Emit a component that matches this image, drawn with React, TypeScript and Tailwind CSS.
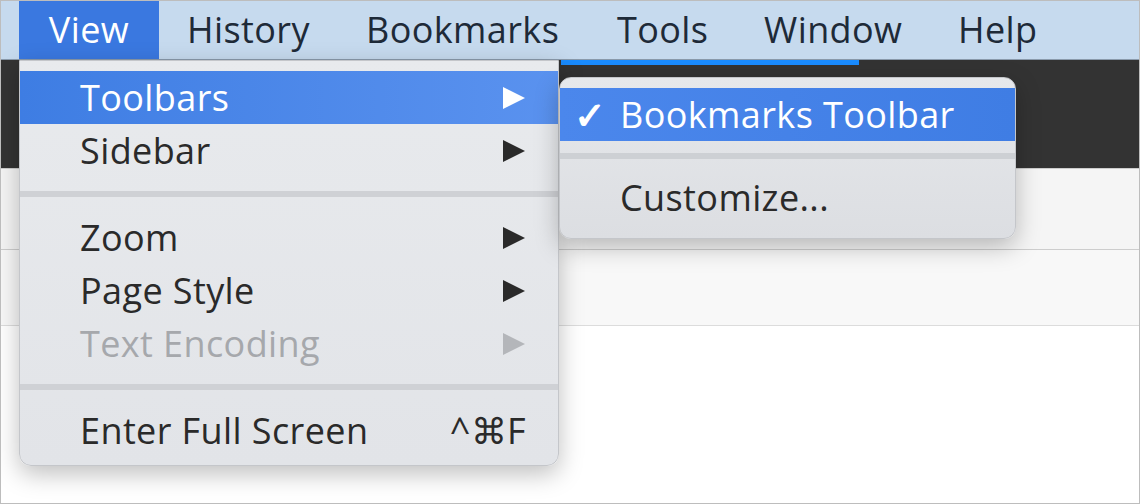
import React from "react";

const Arrow = ({ c }: { c: string }) => (
  <svg width="24" height="24" viewBox="0 0 24 24"><path d="M1 1 L23 12 L1 23 Z" fill={c} /></svg>
);

const Item = ({ label, hl, dim, right }: { label: string; hl?: boolean; dim?: boolean; right?: React.ReactNode }) => (
  <div className={`h-[53px] flex items-center pl-[60px] pr-[32px] justify-between ${hl ? "bg-gradient-to-r from-[#3e7de3] to-[#5a92ef] text-white" : dim ? "text-[#a6a8ac]" : "text-[#2a2a2a]"}`}>
    <span>{label}</span>
    {right}
  </div>
);

const Sep = () => <div className="h-[6px] my-[14px] bg-[#cfd1d5]" />;

export default function App() {
  return (
    <div className="relative w-[1140px] h-[504px] overflow-hidden border border-[#bdbdbd] bg-white text-[36px] tracking-[0.4px]" style={{ fontFamily: "'Open Sans','Noto Sans',sans-serif" }}>
      <div className="h-[59px] bg-[#c6daee] flex items-center text-[#1e2a38] border-b border-[#8a9aab]">
        <div className="ml-[18px] w-[140px] h-full bg-[#3a78e0] text-white flex items-center justify-center">View</div>
        <div className="ml-[28px] w-[179px]">History</div>
        <div className="w-[251px]">Bookmarks</div>
        <div className="w-[147px]">Tools</div>
        <div className="w-[194px]">Window</div>
        <div>Help</div>
      </div>
      <div className="h-[108px] bg-[#333333] relative">
        <div className="absolute left-[560px] top-0 w-[298px] h-[5px] bg-[#1a8cff]" />
      </div>
      <div className="h-[82px] bg-[#f5f5f5] border-y border-[#cdcdcd]" />
      <div className="h-[76px] bg-[#f8f8f8] border-b border-[#dcdcdc]" />

      <div className="absolute left-[18px] top-[59px] w-[540px] h-[406px] rounded-b-[12px] bg-gradient-to-b from-[#e8eaed] to-[#e2e4e8] border border-[#c4c6ca] shadow-[0_8px_24px_rgba(0,0,0,0.25)] pt-[10px]">
        <Item label="Toolbars" hl right={<Arrow c="#fff" />} />
        <Item label="Sidebar" right={<Arrow c="#2a2a2a" />} />
        <Sep />
        <Item label="Zoom" right={<Arrow c="#2a2a2a" />} />
        <Item label="Page Style" right={<Arrow c="#2a2a2a" />} />
        <Item label="Text Encoding" dim right={<Arrow c="#b4b6ba" />} />
        <Sep />
        <Item label="Enter Full Screen" right={<span className="text-[#2a2a2a]">^⌘F</span>} />
      </div>

      <div className="absolute left-[558px] top-[76px] w-[457px] h-[162px] rounded-[12px] bg-gradient-to-b from-[#e6e8eb] to-[#dcdee2] border border-[#c4c6ca] shadow-[0_8px_24px_rgba(0,0,0,0.25)] pt-[10px]">
        <div className="h-[53px] bg-gradient-to-r from-[#4b87ec] to-[#3f7de4] text-white flex items-center pl-[14px]">
          <span className="w-[46px] font-bold text-[38px]">✓</span>Bookmarks Toolbar
        </div>
        <div className="h-[6px] my-[12px] bg-[#cdd0d4]" />
        <div className="h-[53px] flex items-center pl-[60px] text-[#2a2a2a]">Customize...</div>
      </div>
    </div>
  );
}
